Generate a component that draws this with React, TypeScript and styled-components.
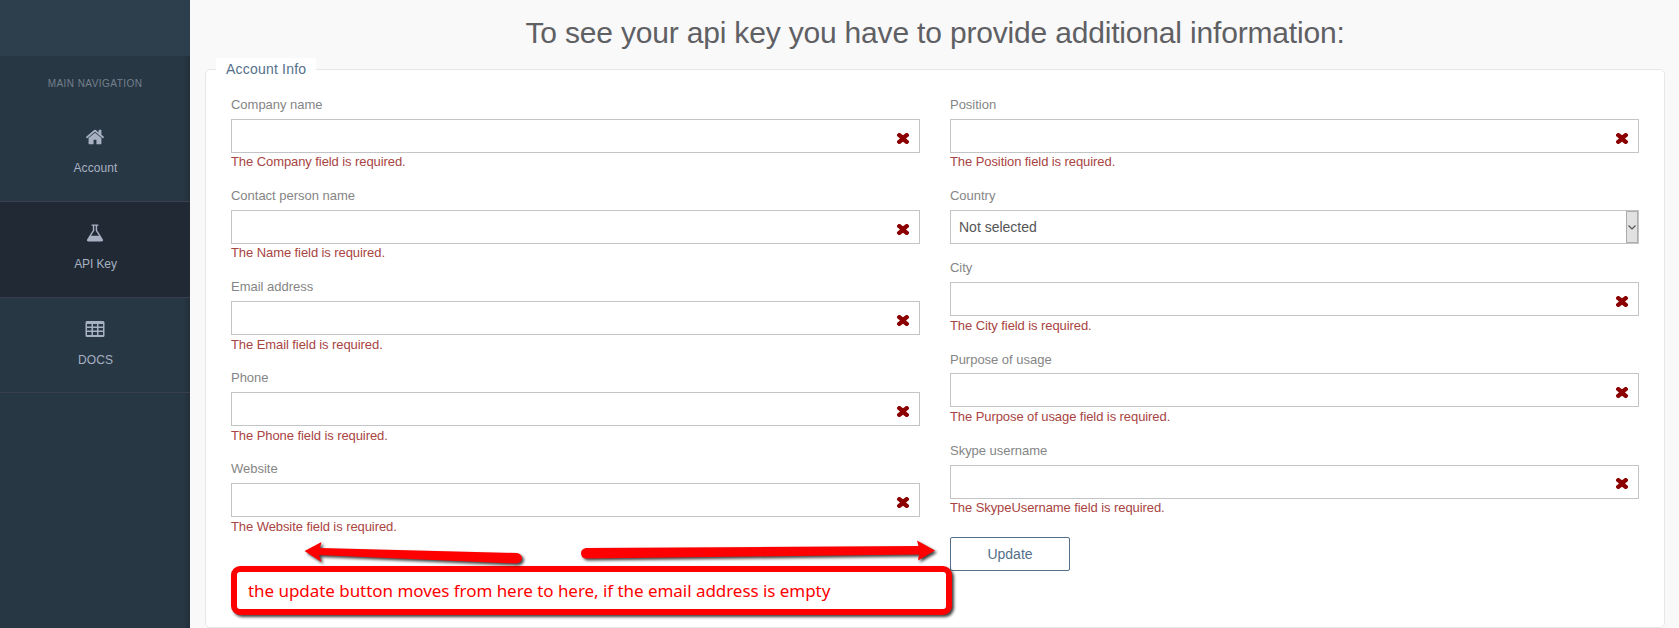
import React from "react";
import styled, { createGlobalStyle } from "styled-components";

const Global = createGlobalStyle`
  *, *::before, *::after { box-sizing: border-box; }
  body { margin: 0; background: #f9f9f9; font-family: "Liberation Sans", Arial, sans-serif; overflow: hidden; }
`;

const Page = styled.div`
  display: flex;
  height: 628px;
  overflow: hidden;
`;

const Sidebar = styled.nav`
  flex: 0 0 190px;
  display: flex;
  flex-direction: column;
  background: linear-gradient(to left, rgba(0, 0, 0, 0.14), transparent 7px), #283744;
`;

const Brand = styled.div`
  height: 56px;
  background: #2d3e4c;
`;

const NavTitle = styled.div`
  height: 50px;
  padding-top: 21px;
  line-height: 14px;
  text-align: center;
  font-size: 10px;
  letter-spacing: 0.45px;
  color: #74808c;
  white-space: nowrap;
`;

const NavItem = styled.a<{ $active?: boolean; $height?: number }>`
  display: flex;
  flex-direction: column;
  align-items: center;
  height: ${(p) => p.$height ?? 96}px;
  padding: 21px 0 0 1px;
  border-bottom: 1px solid #3a3f50;
  background: ${(p) => (p.$active ? "#212a34" : "transparent")};
  color: #a7b1c2;
  font-size: 12px;
  line-height: 16px;
  letter-spacing: ${(p) => (p.$active ? "-0.1px" : "0.1px")};
  gap: 13px;

  svg { width: 20px; height: 20px; margin-right: 2px; display: block; fill: #a7b1c2; }
`;

const Main = styled.main`
  flex: 1;
  min-width: 0;
  padding: 0 14px 0 15px;
`;

const Heading = styled.h1`
  margin: 0;
  height: 58px;
  padding-top: 16px;
  text-align: center;
  font-size: 30px;
  line-height: 34px;
  letter-spacing: -0.18px;
  font-weight: 400;
  color: #5f6064;
  white-space: nowrap;
`;

const Panel = styled.fieldset`
  margin: 0;
  min-width: 0;
  height: 570px;
  padding: 0 25px;
  border: 1px solid #e7e7e7;
  border-radius: 5px;
  background: #fff;
`;

const Legend = styled.legend`
  margin-left: -15px;
  height: 22px;
  padding: 0 10px;
  background: #fff;
  font-size: 14px;
  line-height: 22px;
  letter-spacing: 0.2px;
  color: #54708a;
`;

const Columns = styled.div`
  display: grid;
  grid-template-columns: 689px 689px;
  column-gap: 30px;
  padding-top: 13px;
`;

const Column = styled.div`
  display: flex;
  flex-direction: column;
`;

const Field = styled.div<{ $height: number }>`
  height: ${(p) => p.$height}px;
`;

const Label = styled.label<{ $offset?: number }>`
  display: block;
  height: 26px;
  padding-top: ${(p) => p.$offset ?? 4}px;
  font-size: 13px;
  line-height: 16px;
  letter-spacing: -0.02px;
  color: #858585;
`;

const Box = styled.div`
  display: flex;
  align-items: center;
  justify-content: space-between;
  height: 34px;
  border: 1px solid #c3c4c6;
  background: #fff;
`;

const Cross = styled.svg<{ $drop: number }>`
  width: 12px;
  height: 11px;
  margin: ${(p) => p.$drop}px 10px 0 auto;
  fill: #8b0000;
`;

const ErrorText = styled.div<{ $gap: number }>`
  padding-top: ${(p) => p.$gap}px;
  font-size: 13px;
  line-height: 16px;
  letter-spacing: -0.08px;
  color: #a94442;
`;

const SelectValue = styled.span`
  padding-left: 8px;
  font-size: 14px;
  color: #555;
`;

const SelectArrow = styled.span`
  display: flex;
  align-items: center;
  justify-content: center;
  width: 12px;
  height: 32px;
  border: 1px solid #adadad;
  background: #e1e1e1;

  svg { width: 8px; height: 5px; fill: none; stroke: #555; stroke-width: 1.2; }
`;

const UpdateButton = styled.button`
  width: 120px;
  height: 34px;
  margin-top: 6px;
  padding: 0;
  border: 1px solid #54708a;
  border-radius: 2px;
  background: #fff;
  color: #54708a;
  font-family: inherit;
  font-size: 14px;
`;

const Callout = styled.div`
  position: absolute;
  left: 231px;
  top: 566px;
  width: 721px;
  height: 49px;
  padding-left: 11px;
  border: 6px solid #fe0000;
  border-radius: 9px;
  background: #fff;
  box-shadow: 2px 2px 3px rgba(0, 0, 0, 0.75);
  font-family: "Noto Sans", "Open Sans", sans-serif;
  font-size: 17px;
  line-height: 37px;
  letter-spacing: -0.045px;
  color: #fe0000;
  white-space: nowrap;
`;

const Arrows = styled.svg`
  position: absolute;
  left: 290px;
  top: 530px;
  width: 660px;
  height: 40px;
  overflow: visible;
  fill: #fe0000;
  filter: drop-shadow(2px 2px 1.5px rgba(0, 0, 0, 0.75));
`;

const HomeIcon = () => (
  <svg viewBox="0 0 1792 1792">
    <path d="M1472 992v480q0 26-19 45t-45 19h-384v-384h-256v384h-384q-26 0-45-19t-19-45v-480q0-1 .5-3t.5-3l575-474 575 474q1 2 1 6zm223-69l-62 74q-8 9-21 11h-3q-13 0-21-7l-692-577-692 577q-12 8-24 7-13-2-21-11l-62-74q-8-10-7-23.5t11-21.5l719-599q32-26 76-26t76 26l244 204v-195q0-14 9-23t23-9h192q14 0 23 9t9 23v408l219 182q10 8 11 21.5t-7 23.5z" />
  </svg>
);

const FlaskIcon = () => (
  <svg viewBox="0 0 1792 1792">
    <path d="M1591 1448q56 89 21.5 152.5t-140.5 63.5h-1152q-106 0-140.5-63.5t21.5-152.5l503-793v-399h-64q-26 0-45-19t-19-45 19-45 45-19h512q26 0 45 19t19 45-19 45-45 19h-64v399zm-779-725l-272 429h712l-272-429-20-31v-436h-128v436z" />
  </svg>
);

const TableIcon = () => (
  <svg viewBox="0 0 20 20">
    <path
      fillRule="evenodd"
      d="M2 2h16q1.500 0 1.500 1.500v13q0 1.500-1.500 1.500H2q-1.500 0-1.500-1.500v-13Q.5 2 2 2zM2 5v2.500h4.500V5zM8 5v2.500h4V5zM13.500 5v2.500h4.500V5zM2 9v2.500h4.500V9zM8 9v2.500h4V9zM13.500 9v2.500h4.500V9zM2 13v3h4.500v-3zM8 13v3h4v-3zM13.500 13v3h4.500v-3z"
    />
  </svg>
);

type FieldProps = {
  label: string;
  error: string;
  height?: number;
  errorGap?: number;
  labelOffset?: number;
  crossDrop?: number;
};

const TextField = ({ label, error, height = 91, errorGap = 1, labelOffset, crossDrop = 5 }: FieldProps) => (
  <Field $height={height}>
    <Label $offset={labelOffset}>{label}</Label>
    <Box>
      <Cross $drop={crossDrop} viewBox="0 0 12 11">
        <path d="M3 0L6 2.200 9 0 10.500 0 12 1.500 12 3 9 5.500 12 8 12 9.500 10.500 11 9 11 6 8.800 3 11 1.500 11 0 9.500 0 8 3 5.500 0 3 0 1.500 1.500 0z" />
      </Cross>
    </Box>
    <ErrorText $gap={errorGap}>{error}</ErrorText>
  </Field>
);

export default function App() {
  return (
    <>
      <Global />
      <Page>
        <Sidebar>
          <Brand />
          <NavTitle>MAIN NAVIGATION</NavTitle>
          <NavItem>
            <HomeIcon />
            Account
          </NavItem>
          <NavItem $active>
            <FlaskIcon />
            API Key
          </NavItem>
          <NavItem $height={95}>
            <TableIcon />
            DOCS
          </NavItem>
        </Sidebar>
        <Main>
          <Heading>To see your api key you have to provide additional information:</Heading>
          <Panel>
            <Legend>Account Info</Legend>
            <Columns>
              <Column>
                <TextField label="Company name" error="The Company field is required." />
                <TextField label="Contact person name" error="The Name field is required." />
                <TextField label="Email address" error="The Email field is required." errorGap={2} />
                <TextField label="Phone" error="The Phone field is required." errorGap={2} />
                <TextField label="Website" error="The Website field is required." errorGap={2} />
              </Column>
              <Column>
                <TextField label="Position" error="The Position field is required." />
                <Field $height={72}>
                  <Label>Country</Label>
                  <Box>
                    <SelectValue>Not selected</SelectValue>
                    <SelectArrow>
                      <svg viewBox="0 0 8 5">
                        <path d="M.5 .5L4 4 7.5 .5" />
                      </svg>
                    </SelectArrow>
                  </Box>
                </Field>
                <TextField label="City" error="The City field is required." errorGap={2} />
                <TextField
                  label="Purpose of usage"
                  error="The Purpose of usage field is required."
                  height={92}
                  errorGap={2}
                  labelOffset={5}
                />
                <TextField
                  label="Skype username"
                  error="The SkypeUsername field is required."
                  height={92}
                  crossDrop={3}
                />
                <UpdateButton type="button">Update</UpdateButton>
              </Column>
            </Columns>
          </Panel>
        </Main>
        <Callout>the update button moves from here to here, if the email address is empty</Callout>
        <Arrows viewBox="290 530 660 40">
          <path d="M304.5 551L321.5 542 320 548 517 553Q522 554 522 558.500 521 563 516 563.500L319 555 321.500 562z" />
          <path d="M586 548L918.500 546 917 540.500 935 550.500 918 560.500 919 554.500 586 558.500Q581 558 581 553.200 581 549 586 548z" />
        </Arrows>
      </Page>
    </>
  );
}
